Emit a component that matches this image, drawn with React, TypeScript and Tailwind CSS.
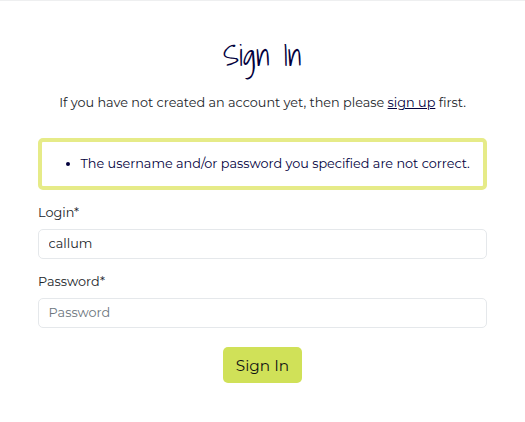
export default function App() {
  return (
    <main className="relative h-[422px] w-[525px] overflow-hidden border-t border-[#eeeff0] bg-white px-[38px] pt-[30px] font-['Montserrat','Inter',sans-serif] text-[12.8px] leading-5 text-[#212529]">
      <span className="absolute -top-px left-0 h-px w-px bg-[#7389a3]" />
      <span className="absolute -top-px right-0 h-px w-px bg-[#526b8c]" />
      <h1 className="flex h-[50px] justify-center whitespace-nowrap font-['Shadows_Into_Light','Lato',sans-serif] text-[29.2px] font-normal leading-[50px] text-[#02003d]">
        Sign In
      </h1>
      <p className="mt-3 flex h-5 justify-center whitespace-nowrap">
        <span>
          If you have not created an account yet, then please{' '}
          <a href="#" className="text-[#02003d] underline">sign up</a> first.
        </span>
      </p>
      <div className="mt-[25px] h-[52px] w-[449px] rounded-[5px] border-4 border-[#e6eb88] pt-3 text-[#02003d]">
        <ul className="list-disc whitespace-nowrap pl-[38.5px]">
          <li><span>The username and/or password you specified are not correct.</span></li>
        </ul>
      </div>
      <form className="flex w-[449px] flex-col" onSubmit={(e) => e.preventDefault()}>
        <label htmlFor="login" className="mt-[13px] h-5">Login*</label>
        <input id="login" defaultValue="callum" className="mt-[6px] h-[30px] rounded-[5px] border border-[#e5e8eb] px-[9.6px] pb-[2px] text-[#212529] outline-none" />
        <label htmlFor="password" className="mt-[13px] h-5">Password*</label>
        <input id="password" type="password" placeholder="Password" className="mt-[6px] h-[30px] rounded-[5px] border border-[#e5e8eb] px-[9.6px] pb-[2px] outline-none placeholder:text-[#6c757d]" />
        <button className="mt-[19px] h-9 w-[79.5px] self-center rounded-[5px] bg-[#d0e158] pt-[2px] text-[15.3px] text-[#101214]">Sign In</button>
      </form>
    </main>
  );
}
